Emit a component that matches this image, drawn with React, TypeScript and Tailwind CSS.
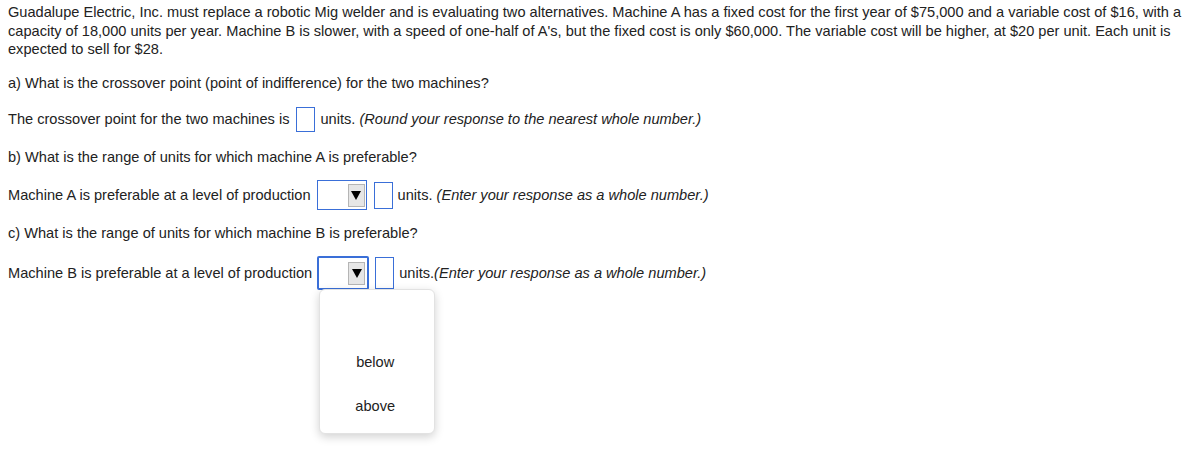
import React from 'react';

function Box({ h = 'h-[25px]' }: { h?: string }) {
  return <span className={`inline-block w-[19px] ${h} border border-[#3a6fd8] bg-white`} />;
}

function Arrow() {
  return (
    <span className="flex h-[23px] w-[17px] items-center justify-center border border-[#b5b5b5] bg-[#e6e6e6]">
      <svg width="10" height="10" viewBox="0 0 10 10">
        <polygon points="0,1 10,1 5,10" fill="#000" />
      </svg>
    </span>
  );
}

function Select({ focused = false, open = false }: { focused?: boolean; open?: boolean }) {
  return (
    <span className="relative inline-block">
      {focused ? (
        <span className="flex h-[34px] w-[52px] items-center justify-end rounded-[2px] border-2 border-[#3a6fd8] bg-white pr-[2px]">
          <Arrow />
        </span>
      ) : (
        <span className="flex h-[30px] w-[50px] items-center justify-end border border-[#3a6fd8] bg-white pr-[1px]">
          <Arrow />
        </span>
      )}
      {open && (
        <div className="absolute left-[2px] top-[33px] z-10 h-[145px] w-[116px] rounded-[6px] border border-[#e2e2e2] bg-white shadow-[0_3px_10px_rgba(0,0,0,0.18)]">
          <div className="flex flex-col items-center pr-[4px] pt-[63px] text-[14.6px] leading-[18px] text-[#222]">
            <span>below</span>
            <span className="mt-[26px]">above</span>
          </div>
        </div>
      )}
    </span>
  );
}

export default function App() {
  return (
    <div
      className="min-h-screen bg-white pl-[8px] pr-[8px] pt-[3px] text-[14.6px] leading-[18.5px] text-[#222]"
      style={{ fontFamily: '"Liberation Sans", Arial, sans-serif' }}
    >
      <p>
        Guadalupe Electric, Inc. must replace a robotic Mig welder and is evaluating two alternatives. Machine A has a fixed cost for the first year of $75,000 and a variable cost of $16, with a capacity of 18,000 units per year. Machine B is slower, with a speed of one-half of A's, but the fixed cost is only $60,000. The variable cost will be higher, at $20 per unit. Each unit is expected to sell for $28.
      </p>

      <p className="mt-[15.5px] leading-[18px]">a) What is the crossover point (point of indifference) for the two machines?</p>

      <div className="mt-[14px] flex h-[26px] items-center">
        <span>The crossover point for the two machines is</span>
        <span className="ml-[7px] mr-[5px] flex">
          <Box />
        </span>
        <span>
          units. <i>(Round your response to the nearest whole number.)</i>
        </span>
      </div>

      <p className="mt-[16px] leading-[18px]">b) What is the range of units for which machine A is preferable?</p>

      <div className="mt-[14px] flex h-[30px] items-center">
        <span>Machine A is preferable at a level of production</span>
        <span className="ml-[6px] flex">
          <Select />
        </span>
        <span className="ml-[7px] mr-[5px] flex">
          <Box h="h-[27px]" />
        </span>
        <span>
          units. <i>(Enter your response as a whole number.)</i>
        </span>
      </div>

      <p className="mt-[14px] leading-[18px]">c) What is the range of units for which machine B is preferable?</p>

      <div className="mt-[14px] flex h-[34px] items-center">
        <span>Machine B is preferable at a level of production</span>
        <span className="ml-[5px] flex">
          <Select focused open />
        </span>
        <span className="ml-[6px] mr-[5px] flex">
          <Box h="h-[32px]" />
        </span>
        <span>
          units.<i>(Enter your response as a whole number.)</i>
        </span>
      </div>
    </div>
  );
}
